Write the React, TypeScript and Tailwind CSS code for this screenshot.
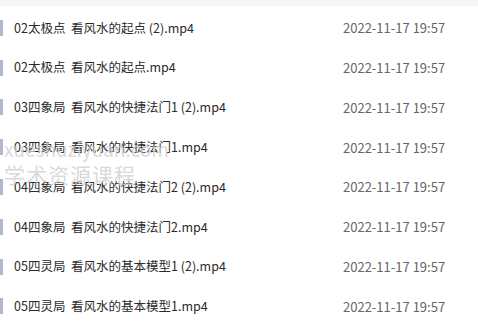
const FILES = [
  "02太极点  看风水的起点 (2).mp4",
  "02太极点  看风水的起点.mp4",
  "03四象局  看风水的快捷法门1 (2).mp4",
  "03四象局  看风水的快捷法门1.mp4",
  "04四象局  看风水的快捷法门2 (2).mp4",
  "04四象局  看风水的快捷法门2.mp4",
  "05四灵局  看风水的基本模型1 (2).mp4",
  "05四灵局  看风水的基本模型1.mp4",
];

export default function App() {
  return (
    <div
      className="relative w-[478px] h-[327px] overflow-hidden bg-white"
      style={{ fontFamily: '"Noto Sans CJK SC", "Noto Sans", sans-serif' }}
    >
      <div className="h-[6px] bg-[#f6f6f6]" />
      <div className="flex flex-col pt-[2px]">
        {FILES.map((name) => (
          <div key={name} className="flex items-center h-[39.8px]">
            <div className="w-[3px] h-[16px] bg-[#b7b4cf]" />
            <span className="ml-[11px] flex-1 text-[12.5px] text-[#2b2b2b] whitespace-pre">{name}</span>
            <span className="w-[135px] text-[13px] text-[#666]">2022-11-17 19:57</span>
          </div>
        ))}
      </div>
      <div className="absolute left-[4px] top-[139px] pointer-events-none text-[#cfcfcf]/80 leading-none">
        <div className="text-[19px]">xueshuziyuan.com</div>
        <div className="mt-[6px] text-[21px] tracking-[1px]">学术资源课程</div>
      </div>
    </div>
  );
}
